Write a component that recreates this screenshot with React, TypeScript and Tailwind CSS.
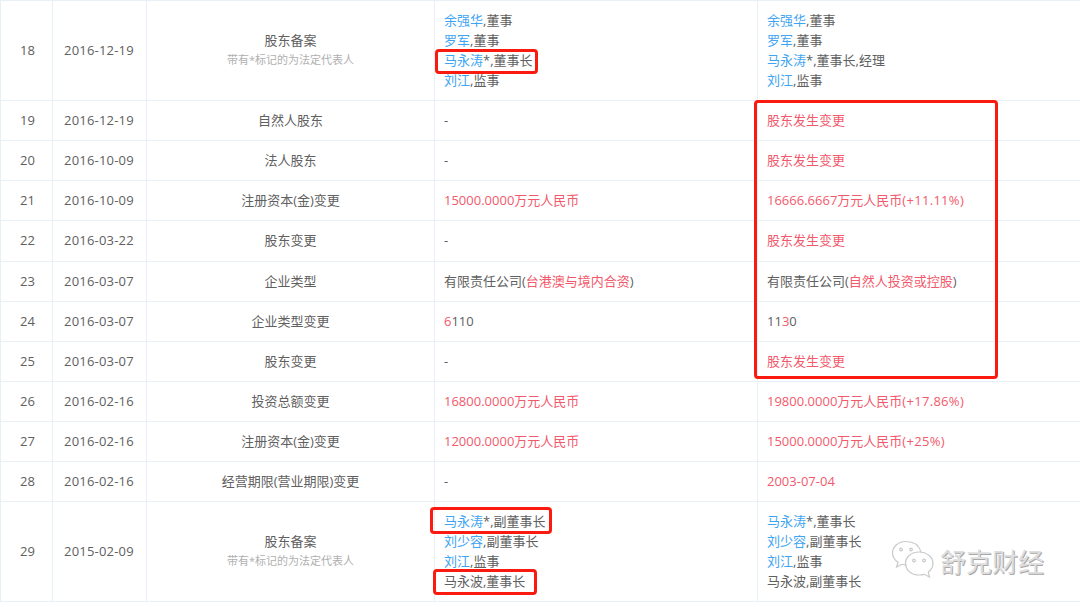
import React from "react";

const FONT = "font-['Open_Sans','Noto_Sans_CJK_SC',sans-serif]";
const cell = "border border-[#e8f0f7] pb-[2px] align-middle text-[13px] leading-[20px] text-[#606060]";
const R = ({ children }: { children: React.ReactNode }) => <span className="text-[#f25a6c]">{children}</span>;
const B = ({ children }: { children: React.ReactNode }) => <span className="text-[#3fa5f2]">{children}</span>;
const Pct = ({ children }: { children: React.ReactNode }) => <span className="tracking-[0.3px]">{children}</span>;

type Row = { n: number; date: string; type: React.ReactNode; before: React.ReactNode; after: React.ReactNode };

const person = (name: string, rest: string) => (
  <div key={name + rest} className="h-[20px]">
    {name ? <B>{name}</B> : null}
    {rest}
  </div>
);

const filing = (
  <>
    <div>股东备案</div>
    <div className="text-[11px] text-[#b0b0b0]">带有*标记的为法定代表人</div>
  </>
);

const rows: Row[] = [
  {
    n: 18,
    date: "2016-12-19",
    type: filing,
    before: [person("余强华", ",董事"), person("罗军", ",董事"), person("马永涛", "*,董事长"), person("刘江", ",监事")],
    after: [person("余强华", ",董事"), person("罗军", ",董事"), person("马永涛", "*,董事长,经理"), person("刘江", ",监事")],
  },
  { n: 19, date: "2016-12-19", type: "自然人股东", before: "-", after: <R>股东发生变更</R> },
  { n: 20, date: "2016-10-09", type: "法人股东", before: "-", after: <R>股东发生变更</R> },
  { n: 21, date: "2016-10-09", type: "注册资本(金)变更", before: <R>15000.0000万元人民币</R>, after: <R>16666.6667万元人民币<Pct>(+11.11%)</Pct></R> },
  { n: 22, date: "2016-03-22", type: "股东变更", before: "-", after: <R>股东发生变更</R> },
  {
    n: 23,
    date: "2016-03-07",
    type: "企业类型",
    before: <>有限责任公司(<R>台港澳与境内合资</R>)</>,
    after: <>有限责任公司(<R>自然人投资或控股</R>)</>,
  },
  { n: 24, date: "2016-03-07", type: "企业类型变更", before: <><R>6</R>110</>, after: <>11<R>3</R>0</> },
  { n: 25, date: "2016-03-07", type: "股东变更", before: "-", after: <R>股东发生变更</R> },
  { n: 26, date: "2016-02-16", type: "投资总额变更", before: <R>16800.0000万元人民币</R>, after: <R>19800.0000万元人民币<Pct>(+17.86%)</Pct></R> },
  { n: 27, date: "2016-02-16", type: "注册资本(金)变更", before: <R>12000.0000万元人民币</R>, after: <R>15000.0000万元人民币<Pct>(+25%)</Pct></R> },
  { n: 28, date: "2016-02-16", type: "经营期限(营业期限)变更", before: "-", after: <R>2003-07-04</R> },
  {
    n: 29,
    date: "2015-02-09",
    type: filing,
    before: [person("马永涛", "*,副董事长"), person("刘少容", ",副董事长"), person("刘江", ",监事"), person("", "马永波,董事长")],
    after: [person("马永涛", "*,董事长"), person("刘少容", ",副董事长"), person("刘江", ",监事"), person("", "马永波,副董事长")],
  },
];

const rowHeight = (n: number) => {
  if (n === 18 || n === 29) return "h-[100px]";
  if (n === 22) return "h-[41px]";
  return "h-[40px]";
};

const Mark = ({ className }: { className: string }) => (
  <div className={`absolute rounded-[4px] border-[3px] border-[#fb1a10] ${className}`} />
);

export default function App() {
  return (
    <div className={`relative h-[607px] w-[1080px] overflow-hidden bg-white ${FONT}`}>
      <table className="w-[1081px] table-fixed border-collapse">
        <colgroup>
          <col className="w-[52px]" />
          <col className="w-[94px]" />
          <col className="w-[288px]" />
          <col className="w-[323px]" />
          <col className="w-[324px]" />
        </colgroup>
        <tbody>
          {rows.map((r) => (
            <tr key={r.n} className={rowHeight(r.n)}>
              <td className={`${cell} pl-[2px] text-center`}>{r.n}</td>
              <td className={`${cell} pl-[11px] tracking-[0.2px]`}>{r.date}</td>
              <td className={`${cell} text-center`}>{r.type}</td>
              <td className={`${cell} pl-[9px]`}>{r.before}</td>
              <td className={`${cell} pl-[9px]`}>{r.after}</td>
            </tr>
          ))}
        </tbody>
      </table>

      <Mark className="left-[435px] top-[49px] h-[25px] w-[103px]" />
      <Mark className="left-[754px] top-[100px] h-[279px] w-[244px]" />
      <Mark className="left-[430px] top-[507px] h-[27px] w-[122px]" />
      <Mark className="left-[433px] top-[569px] h-[26px] w-[104px]" />

      <div className="absolute left-[891px] top-[543px] flex items-center gap-[5px]">
        <svg className="-translate-y-[3px]" width="44" height="38" viewBox="0 0 44 38" fill="none" stroke="#c9c9c9" strokeWidth="1.2">
          <path d="M30 12C28 5 22 1.500 15 1.500 7.500 1.500 1.500 6.500 1.500 13c0 4 2.200 7 5.500 9.300L5.500 27l5.300-2.700c1.600.5 3 .7 4.700.8" />
          <circle cx="10" cy="9.500" r="1.300" />
          <circle cx="20" cy="9.500" r="1.300" />
          <path d="M28 12c7.500 0 14 5 14 11.500 0 3.600-1.900 6.500-4.700 8.600L38.500 37l-5-2.700c-1.800.5-3.500.7-5.500.7-7.500 0-13.500-5-13.500-11.500S20.500 12 28 12Z" />
          <circle cx="23" cy="20.500" r="1.300" />
          <circle cx="33" cy="20.500" r="1.300" />
        </svg>
        <span className="text-[26px] leading-[34px] text-[#dedede] [text-shadow:1px_1px_0_#a8a8a8]">舒克财经</span>
      </div>
    </div>
  );
}
